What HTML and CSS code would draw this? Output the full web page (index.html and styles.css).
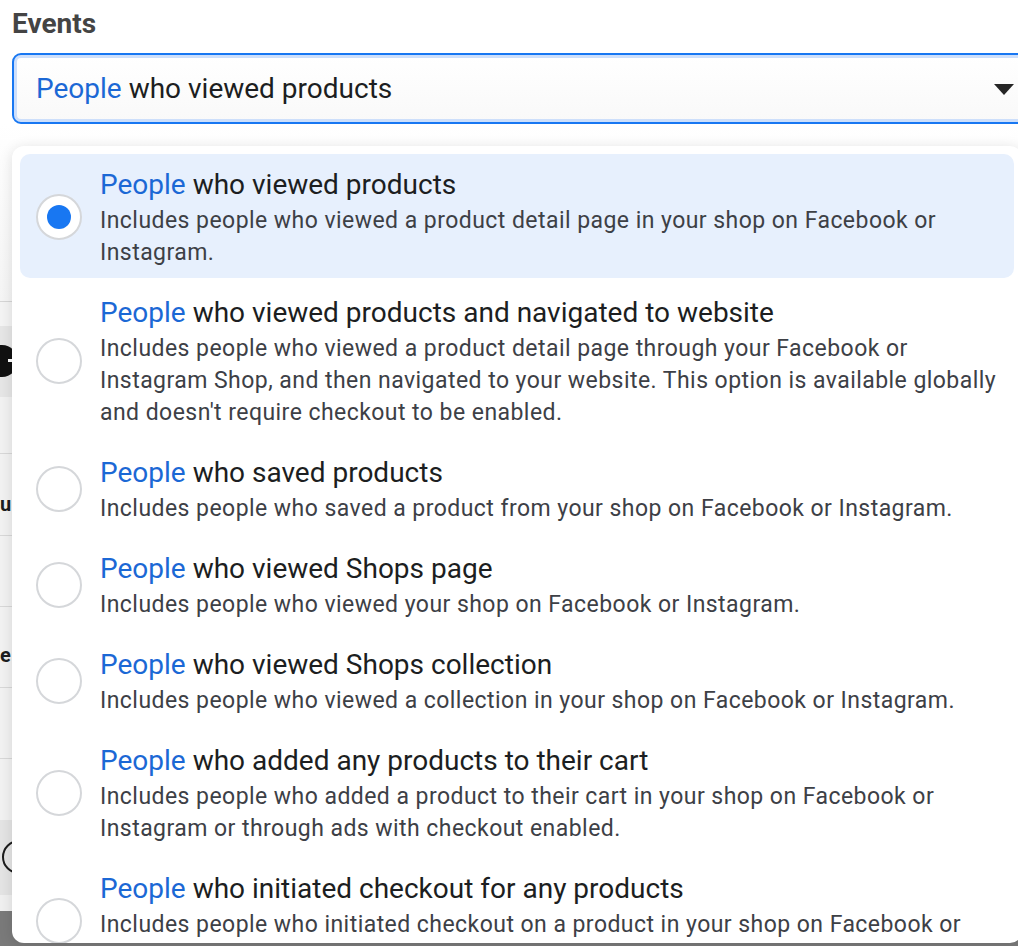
FILE: index.html
```html
<!DOCTYPE html>
<html>
<head>
<meta charset="utf-8">
<link rel="stylesheet" href="styles.css">
</head>
<body>
<div class="page">
  <div class="field">
    <div class="label">Events</div>
    <div class="select">
      <span class="value"><span class="kw">People</span> who viewed products</span>
      <span class="arrow"></span>
    </div>
  </div>

  <div class="under">
    <div class="u-top"></div>
    <div class="u-strip"></div>
    <div class="u-block"><span class="u-icon"></span></div>
    <div class="u-row u-row-a"></div>
    <div class="u-row u-row-b"><span class="u-text">u</span></div>
    <div class="u-row u-row-c"></div>
    <div class="u-row u-row-d"><span class="u-text">e</span></div>
    <div class="u-row u-row-e"></div>
    <div class="u-row u-row-f"></div>
    <div class="u-block2"><span class="u-ring"></span></div>
    <div class="u-light"></div>
    <div class="u-dark"></div>
  </div>

  <div class="menu">
    <div class="option selected">
      <span class="radio"><span class="dot"></span></span>
      <div class="text">
        <div class="title"><span class="kw">People</span> who viewed products</div>
        <div class="desc">Includes people who viewed a product detail page in your shop on Facebook or Instagram.</div>
      </div>
    </div>
    <div class="option">
      <span class="radio"></span>
      <div class="text">
        <div class="title"><span class="kw">People</span> who viewed products and navigated to website</div>
        <div class="desc">Includes people who viewed a product detail page through your Facebook or Instagram Shop, and then navigated to your website. This option is available globally and doesn't require checkout to be enabled.</div>
      </div>
    </div>
    <div class="option">
      <span class="radio"></span>
      <div class="text">
        <div class="title"><span class="kw">People</span> who saved products</div>
        <div class="desc">Includes people who saved a product from your shop on Facebook or Instagram.</div>
      </div>
    </div>
    <div class="option">
      <span class="radio"></span>
      <div class="text">
        <div class="title"><span class="kw">People</span> who viewed Shops page</div>
        <div class="desc">Includes people who viewed your shop on Facebook or Instagram.</div>
      </div>
    </div>
    <div class="option">
      <span class="radio"></span>
      <div class="text">
        <div class="title"><span class="kw">People</span> who viewed Shops collection</div>
        <div class="desc">Includes people who viewed a collection in your shop on Facebook or Instagram.</div>
      </div>
    </div>
    <div class="option">
      <span class="radio"></span>
      <div class="text">
        <div class="title"><span class="kw">People</span> who added any products to their cart</div>
        <div class="desc">Includes people who added a product to their cart in your shop on Facebook or Instagram or through ads with checkout enabled.</div>
      </div>
    </div>
    <div class="option">
      <span class="radio"></span>
      <div class="text">
        <div class="title"><span class="kw">People</span> who initiated checkout for any products</div>
        <div class="desc">Includes people who initiated checkout on a product in your shop on Facebook or Instagram.</div>
      </div>
    </div>
  </div>
</div>
</body>
</html>
```
FILE: styles.css
```css
html, body {
  margin: 0;
  padding: 0;
  overflow: hidden;
  background: #ffffff;
}
body {
  font-family: Roboto, "Liberation Sans", Arial, sans-serif;
  width: 1018px;
  height: 946px;
}
.page {
  position: relative;
  width: 1018px;
  height: 946px;
  overflow: hidden;
}

/* field */
.field {
  padding: 8px 0 0 12px;
}
.label {
  font-size: 28px;
  font-weight: 700;
  color: #444444;
  line-height: 32px;
  height: 33px;
  margin-bottom: 12px;
}
.select {
  width: 1040px;
  height: 71px;
  box-sizing: border-box;
  border: 2px solid #1877f2;
  border-radius: 9px;
  box-shadow: inset 0 0 0 3px #cddffb;
  background: linear-gradient(#ffffff, #f9f9f9);
  display: flex;
  align-items: center;
  padding: 0 36px 0 22px;
  justify-content: space-between;
}
.value {
  font-size: 28px;
  color: #1c1e21;
}
.kw {
  color: #1b68d5;
}
.arrow {
  width: 0;
  height: 0;
  border-left: 10px solid transparent;
  border-right: 10px solid transparent;
  border-top: 11px solid #262626;
  margin-top: 2px;
}

/* underlying page (visible at left edge) */
.under {
  background: linear-gradient(#ffffff, #f3f3f3 200px);
}
.u-top {
  height: 177px;
  border-bottom: 1px solid #d6d6d6;
  background: linear-gradient(#ffffff, #f5f5f5);
}
.u-strip {
  height: 24px;
  background: #f4f4f4;
}
.u-block {
  height: 71px;
  background: #e6e6e6;
  position: relative;
}
.u-icon {
  position: absolute;
  left: -14px;
  top: 19px;
  width: 32px;
  height: 32px;
  border-radius: 50%;
  background: #111111;
}
.u-icon::after {
  content: "";
  position: absolute;
  left: 22px;
  top: 14px;
  width: 10px;
  height: 3px;
  background: #ffffff;
}
.u-row {
  border-bottom: 1px solid #d8d8d8;
  background: #f2f2f2;
  position: relative;
}
.u-row-a { height: 56px; }
.u-row-b { height: 81px; }
.u-row-c { height: 70px; }
.u-row-d { height: 80px; }
.u-row-e { height: 70px; }
.u-row-f { height: 61px; border-bottom: none; }
.u-text {
  position: absolute;
  left: 0;
  font-size: 20px;
  font-weight: 700;
  color: #1c1e21;
}
.u-row-b .u-text { top: 38px; }
.u-row-d .u-text { top: 36px; }
.u-block2 {
  height: 75px;
  background: #e4e4e4;
  position: relative;
}
.u-ring {
  position: absolute;
  left: 2px;
  top: 20px;
  width: 30px;
  height: 30px;
  border: 2px solid #1c1c1c;
  border-radius: 50%;
}
.u-light {
  height: 16px;
  background: #f0f0f0;
}
.u-dark {
  height: 40px;
  background: #7a7a7a;
}

/* dropdown menu */
.menu {
  position: absolute;
  left: 12px;
  top: 146px;
  width: 1010px;
  height: 797px;
  box-sizing: border-box;
  padding: 8px;
  background: #ffffff;
  border-radius: 12px;
  box-shadow: 0 2px 14px rgba(0, 0, 0, 0.12);
  overflow: hidden;
  display: flex;
  flex-direction: column;
  gap: 4px;
}
.option {
  display: flex;
  align-items: center;
  gap: 18px;
  padding: 11px 12px 9px 16px;
  border-radius: 10px;
  flex-shrink: 0;
}
.option.selected {
  background: #e7f0fd;
}
.radio {
  flex: 0 0 auto;
  width: 46px;
  height: 46px;
  box-sizing: border-box;
  border: 2px solid #d5d7da;
  border-radius: 50%;
  background: #ffffff;
  display: flex;
  align-items: center;
  justify-content: center;
}
.dot {
  width: 24px;
  height: 24px;
  border-radius: 50%;
  background: #1877f2;
}
.text {
  flex: 1 1 auto;
  min-width: 0;
}
.title {
  font-size: 28px;
  line-height: 40px;
  color: #1c1e21;
}
.desc {
  font-size: 23px;
  letter-spacing: 0.45px;
  line-height: 32px;
  color: #3d4046;
}
```
